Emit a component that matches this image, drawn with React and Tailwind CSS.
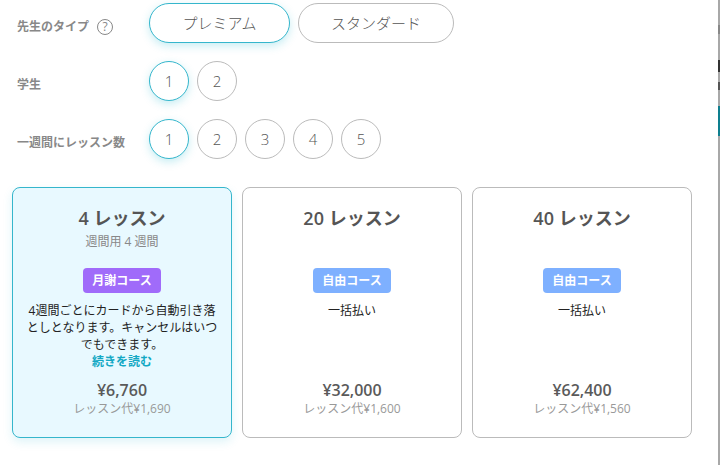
import React from 'react'

const font = { fontFamily: '"Open Sans", "Noto Sans CJK JP", sans-serif' }

const plans = [
  {
    title: '4',
    sub: '週間用 4 週間',
    tag: '月謝コース',
    tagColor: 'bg-[#a06bfa]',
    desc: '4週間ごとにカードから自動引き落としとなります。キャンセルはいつでもできます。',
    more: true,
    price: '¥6,760',
    unit: 'レッスン代¥1,690',
    active: true,
  },
  { title: '20', tag: '自由コース', tagColor: 'bg-[#7eb0ff]', desc: '一括払い', price: '¥32,000', unit: 'レッスン代¥1,600' },
  { title: '40', tag: '自由コース', tagColor: 'bg-[#7eb0ff]', desc: '一括払い', price: '¥62,400', unit: 'レッスン代¥1,560' },
]

function Circle({ n, active }) {
  return (
    <button
      className={
        'w-10 h-10 rounded-full bg-white border text-[15px] font-light text-[#555] flex items-center justify-center ' +
        (active ? 'border-[#35b6cc] shadow-[0_3px_8px_rgba(31,182,207,0.25)]' : 'border-[#bbb]')
      }
    >
      {n}
    </button>
  )
}

function Row({ label, help, children, className }) {
  return (
    <div className={'flex items-center ' + className}>
      <div className="w-[149px] pl-[17px] pt-[8px] flex items-center text-xs font-semibold text-[#888]">
        <span>{label}</span>
        {help && (
          <span className="ml-2 w-4 h-4 rounded-full border border-[#888] text-xs font-normal flex items-center justify-center">?</span>
        )}
      </div>
      <div className="flex gap-2">{children}</div>
    </div>
  )
}

function PlanCard({ plan }) {
  return (
    <div
      className={
        'w-[220px] h-[251px] rounded-lg border flex flex-col items-center text-center ' +
        (plan.active ? 'border-[#35b6cc] bg-[#e8f9ff] shadow-[0_4px_10px_rgba(31,182,207,0.15)]' : 'border-[#bbb] bg-white')
      }
    >
      <div className="mt-4 h-[28px] text-lg leading-[28px] font-semibold text-[#555]">{plan.title} レッスン</div>
      <div className="h-5 text-xs leading-5 text-[#888]">{plan.sub}</div>
      <div className={'mt-4 w-[78px] h-[25px] rounded-sm text-xs font-bold leading-[25px] text-white ' + plan.tagColor}>{plan.tag}</div>
      <div className="mt-[9px] w-[196px] h-[72px] text-xs leading-[17px] text-[#222]">
        {plan.desc}
        {plan.more && <div className="font-bold text-[#12a8c4]">続きを読む</div>}
      </div>
      <div className="mt-[6px] text-base leading-5 font-semibold text-[#5a5a5a]">{plan.price}</div>
      <div className="text-xs leading-[17px] text-[#999]">{plan.unit}</div>
    </div>
  )
}

export default function App() {
  return (
    <div style={font} className="flex w-[720px] h-[465px] bg-white overflow-hidden">
      <div className="w-[718px]">
        <Row label="先生のタイプ" help className="pt-[3px]">
          <button className="w-[141px] h-10 rounded-full bg-white border border-[#35b6cc] text-[15px] font-light text-[#555] shadow-[0_3px_8px_rgba(31,182,207,0.25)]">プレミアム</button>
          <button className="w-[156px] h-10 rounded-full bg-white border border-[#bbb] text-[15px] font-light text-[#555]">スタンダード</button>
        </Row>
        <Row label="学生" className="mt-[18px]">
          <Circle n="1" active />
          <Circle n="2" />
        </Row>
        <Row label="一週間にレッスン数" className="mt-[18px]">
          <Circle n="1" active />
          <Circle n="2" />
          <Circle n="3" />
          <Circle n="4" />
          <Circle n="5" />
        </Row>
        <div className="flex gap-[10px] pl-3 mt-[28px]">
          {plans.map((p) => (
            <PlanCard key={p.title} plan={p} />
          ))}
        </div>
      </div>
      {/* page behind the dialog, only its edge shows */}
      <div className="w-[2px] h-full flex flex-col bg-[#a8a8a8]">
        <div className="h-[25px] shrink-0" />
        <div className="h-[9px] shrink-0 bg-[#888]" />
        <div className="h-[26px] shrink-0" />
        <div className="h-[12px] shrink-0 bg-[#333]" />
        <div className="h-[10px] shrink-0" />
        <div className="h-[8px] shrink-0 bg-[#555]" />
        <div className="h-4 shrink-0" />
        <div className="h-[30px] shrink-0 bg-[#0e7f8f]" />
      </div>
    </div>
  )
}
